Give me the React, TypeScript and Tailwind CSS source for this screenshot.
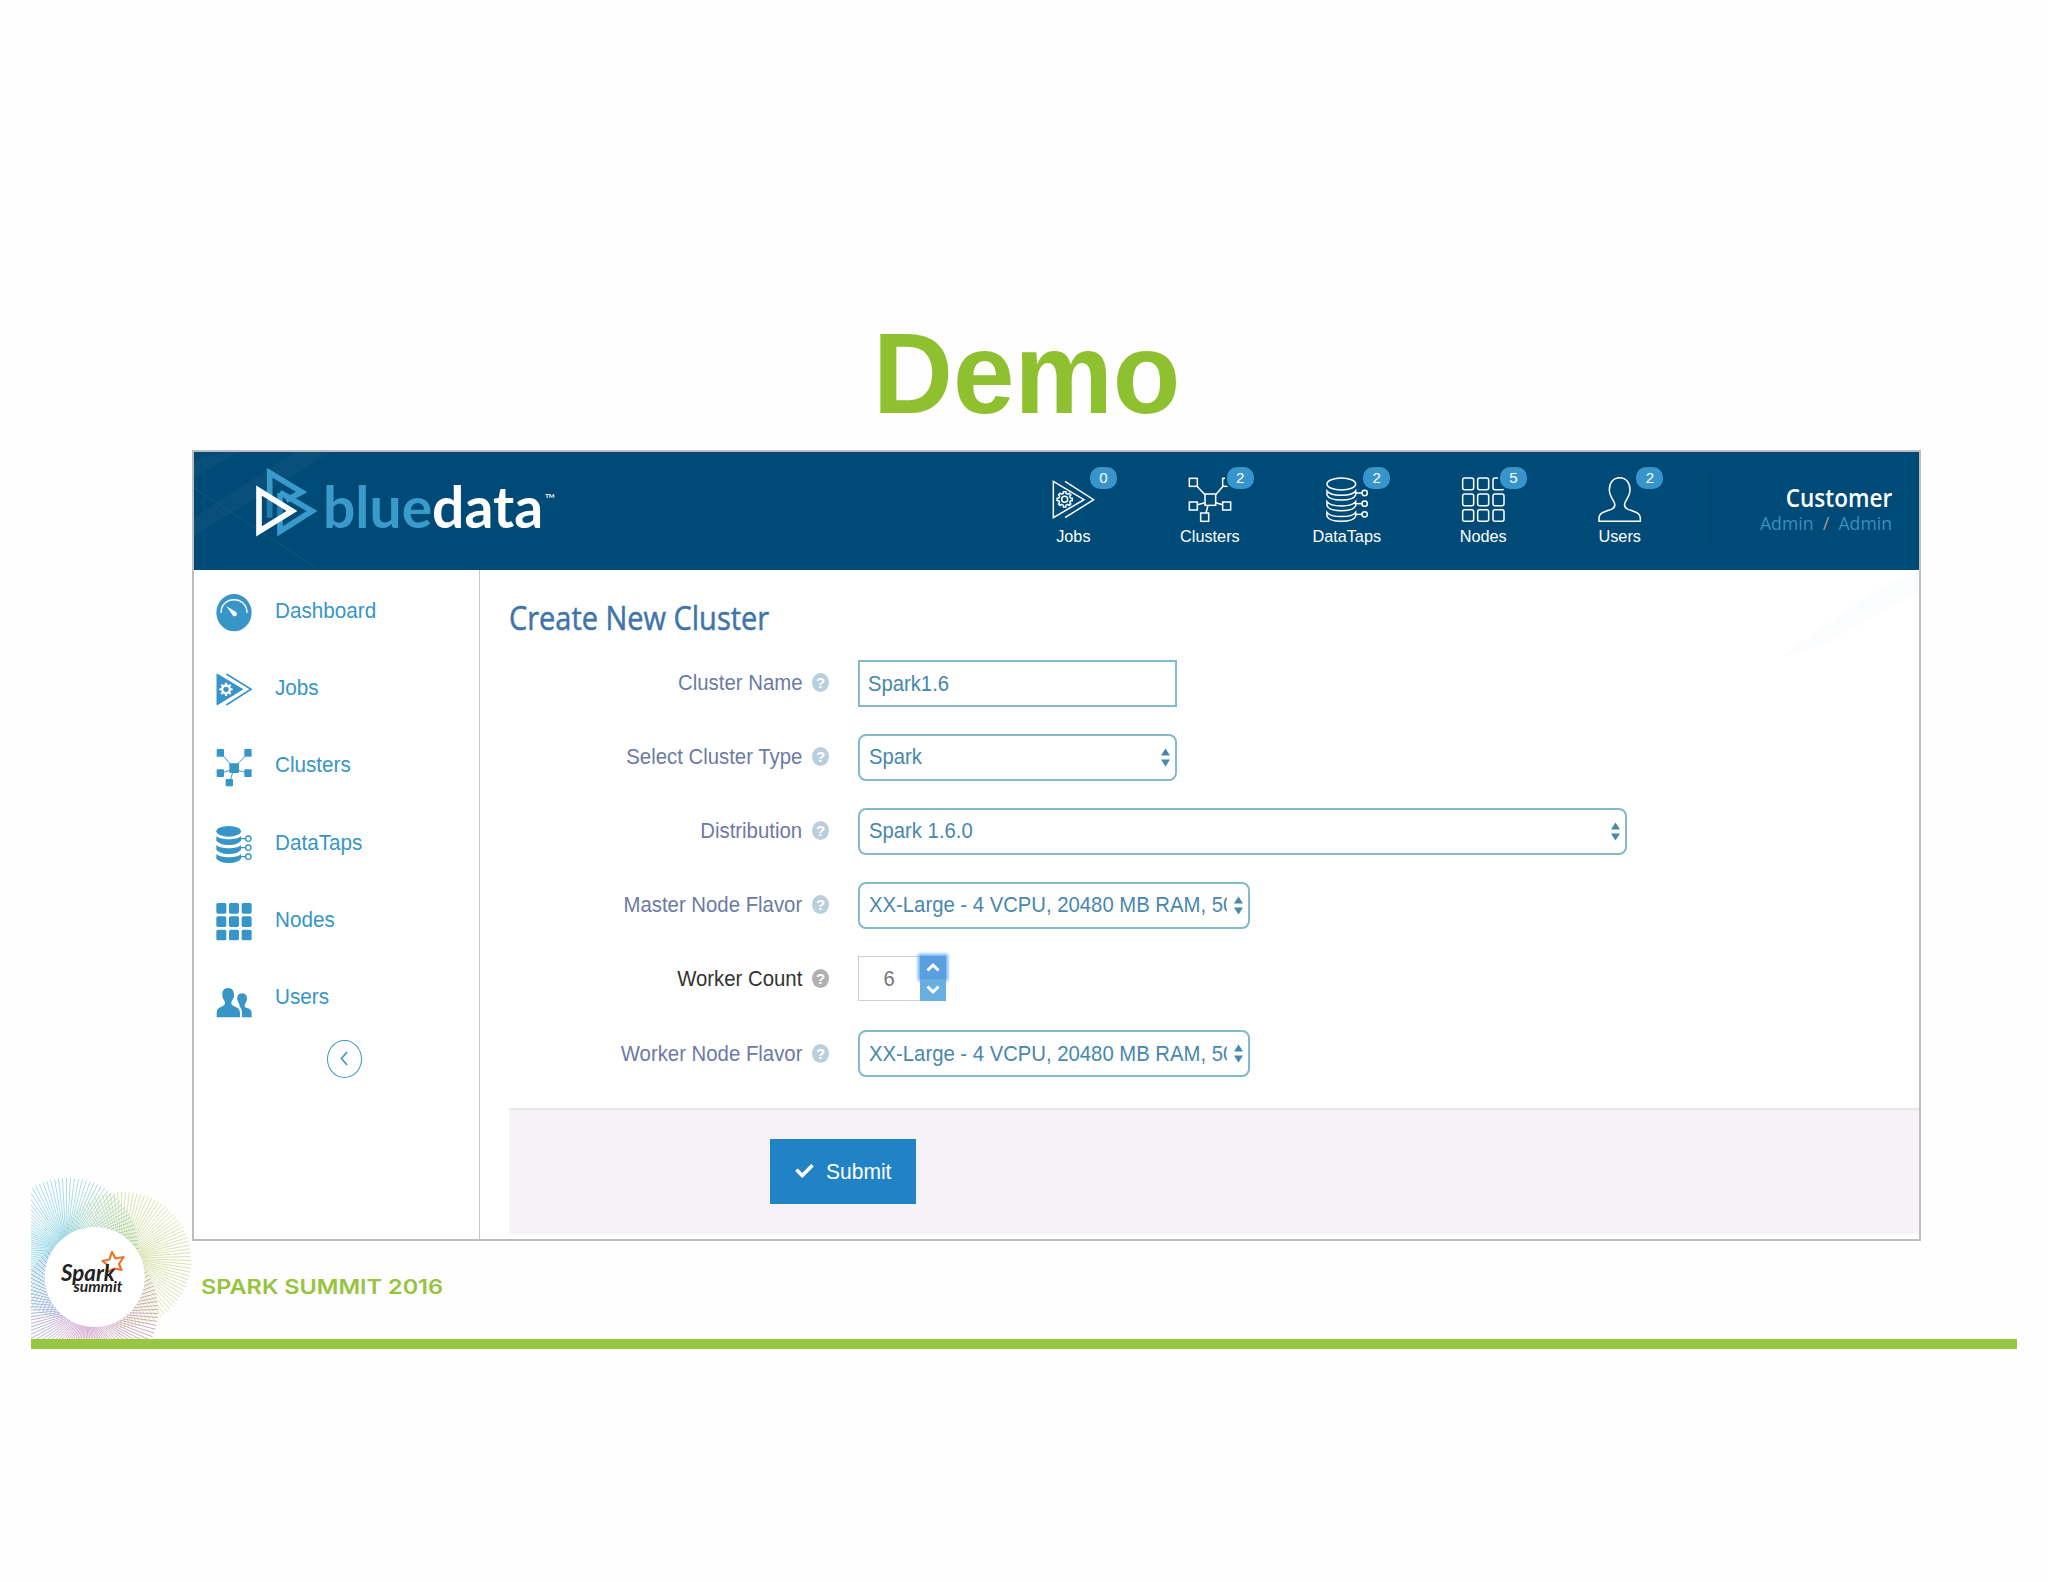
import type { ReactNode } from 'react';
import { FaCheck } from 'react-icons/fa';

/* ---------- helpers for drawn shapes ---------- */

// closed gear outline with rounded-off teeth
function gearPath(cx: number, cy: number, outer: number, inner: number, teeth: number) {
  const pts: string[] = [];
  const step = (Math.PI * 2) / teeth;
  for (let i = 0; i < teeth; i++) {
    const a = i * step - Math.PI / 2;
    [[-0.3, inner], [-0.2, outer], [0.2, outer], [0.3, inner]].forEach(([o, r]) => {
      pts.push(`${(cx + Math.cos(a + o * step) * r).toFixed(1)},${(cy + Math.sin(a + o * step) * r).toFixed(1)}`);
    });
  }
  return `M${pts.join('L')}Z`;
}

// fan of slightly twisted spokes
function fanPath(cx: number, cy: number, r: number, count: number, twist: number) {
  let d = '';
  for (let i = 0; i < count; i++) {
    const a = (i / count) * Math.PI * 2;
    const b = a + twist;
    d += `M${(cx + Math.cos(a) * 5).toFixed(1)} ${(cy + Math.sin(a) * 5).toFixed(1)}L${(cx + Math.cos(b) * r).toFixed(1)} ${(cy + Math.sin(b) * r).toFixed(1)}`;
  }
  return d;
}

/* ---------- header icons (outlined) ---------- */

const JobsOutline = () => (
  <>
    <path d="M7 13L99 68L7 122Z" />
    <path d="M42 13L128 68L42 122" />
    <path d={gearPath(41, 67, 23, 18, 8)} />
    <circle cx="41" cy="67" r="9" />
  </>
);

const ClustersOutline = () => (
  <>
    <rect x="51" y="51" width="32" height="34" />
    <rect x="4" y="4" width="24" height="24" />
    <rect x="104" y="4" width="24" height="24" />
    <rect x="4" y="75" width="24" height="24" />
    <rect x="104" y="75" width="24" height="24" />
    <rect x="38" y="108" width="24" height="25" />
    <path d="M27 28L51 53M105 28L83 53M28 83L51 77M104 83L83 77M54 108L60 85" />
  </>
);

const DataTapsOutline = () => (
  <>
    <ellipse cx="49" cy="21" rx="43" ry="18" />
    {[42, 74, 106].map((y) => (
      <g key={y}>
        <path d={`M6 ${y}V${y + 12}C14 ${y + 32} 84 ${y + 32} 92 ${y + 12}V${y}C80 ${y + 17} 18 ${y + 17} 6 ${y}Z`} />
        <path d={`M92 ${y + 6}H112`} />
        <circle cx="119" cy={y + 6} r="8" />
      </g>
    ))}
  </>
);

const NodesOutline = () => (
  <>
    {[3, 51, 98].map((y) => [5, 50, 96].map((x) => <rect key={`${x}-${y}`} x={x} y={y} width="33" height="35" rx="6" />))}
  </>
);

const UsersOutline = () => (
  <path d="M65 2C45 2 34 18 34 38C34 58 47 68 50 80C52 90 47 94 40 97C22 104 3 106 3 124V133H127V124C127 106 108 104 90 97C83 94 78 90 80 80C83 68 96 58 96 38C96 18 85 2 65 2Z" />
);

/* ---------- sidebar icons (solid), 36 x 37 box drawn at 3x ---------- */

const DashboardSolid = () => (
  <>
    <ellipse cx="54" cy="56" rx="53" ry="56" />
    <path d="M15 57C15 4 93 4 93 57" fill="none" stroke="#fff" strokeWidth="4" />
    <path d="M31 36L60 54C67 60 60 70 52 66C50 64 49 63 48 61Z" fill="#fff" />
  </>
);

const JobsSolid = () => (
  <>
    <path d="M3 9L80 55L3 102Z" stroke="currentColor" strokeWidth="3" strokeLinejoin="round" />
    <path d="M31 9L105 55L31 102" fill="none" stroke="currentColor" strokeWidth="5" />
    <path d={gearPath(30, 55, 20, 15, 8)} fill="#fff" />
    <circle cx="30" cy="55" r="8" />
  </>
);

const ClustersSolid = () => (
  <>
    <rect x="40" y="43" width="29" height="29" rx="3" />
    <rect x="2" y="0" width="22" height="23" rx="3" />
    <rect x="85" y="0" width="22" height="23" rx="3" />
    <rect x="2" y="61" width="22" height="23" rx="3" />
    <rect x="85" y="61" width="22" height="23" rx="3" />
    <rect x="29" y="90" width="22" height="22" rx="3" />
    <path d="M14 12L54 57L96 12M14 73L54 60L96 73M54 57L41 100" fill="none" stroke="currentColor" strokeWidth="3" />
  </>
);

const DataTapsSolid = () => (
  <>
    <ellipse cx="38" cy="16" rx="37" ry="16" />
    {[30, 57, 84].map((y) => (
      <g key={y}>
        <path d={`M1 ${y}C14 ${y + 13} 64 ${y + 13} 75 ${y}V${y + 14}C64 ${y + 31} 14 ${y + 31} 1 ${y + 14}Z`} />
        <path d={`M74 ${y + 8}H90`} stroke="currentColor" strokeWidth="4" />
        <circle cx="97" cy={y + 8} r="8" fill="none" stroke="currentColor" strokeWidth="4" />
      </g>
    ))}
  </>
);

const NodesSolid = () => (
  <>
    {[0, 40, 80].map((y) => [1, 39, 77].map((x) => <rect key={`${x}-${y}`} x={x} y={y} width="30" height="32" rx="5" />))}
  </>
);

const UsersSolid = () => (
  <>
    <path d="M36 24C23 24 18 34 19 47C20 58 27 60 27 70C27 82 2 78 2 98V112H72V98C72 78 46 82 46 70C46 60 53 58 54 47C55 34 49 24 36 24Z" />
    <path d="M78 40C67 40 63 49 64 58C65 67 71 70 71 78C71 84 78 82 78 98V112H107V99C107 82 86 86 86 78C86 70 92 67 93 58C94 49 89 40 78 40Z" />
  </>
);

/* ---------- data ---------- */

const TOP_ITEMS: { label: string; count: number; icon: ReactNode }[] = [
  { label: 'Jobs', count: 0, icon: <JobsOutline /> },
  { label: 'Clusters', count: 2, icon: <ClustersOutline /> },
  { label: 'DataTaps', count: 2, icon: <DataTapsOutline /> },
  { label: 'Nodes', count: 5, icon: <NodesOutline /> },
  { label: 'Users', count: 2, icon: <UsersOutline /> },
];

const SIDE_ITEMS: { label: string; icon: ReactNode }[] = [
  { label: 'Dashboard', icon: <DashboardSolid /> },
  { label: 'Jobs', icon: <JobsSolid /> },
  { label: 'Clusters', icon: <ClustersSolid /> },
  { label: 'DataTaps', icon: <DataTapsSolid /> },
  { label: 'Nodes', icon: <NodesSolid /> },
  { label: 'Users', icon: <UsersSolid /> },
];

const FLAVOR = 'XX-Large - 4 VCPU, 20480 MB RAM, 500 GB';

/* ---------- form pieces ---------- */

interface FormRowProps {
  label: string;
  muted?: boolean;
  children: ReactNode;
}

function FormRow({ label, muted = true, children }: FormRowProps) {
  return (
    <div className="flex h-[74.1px] items-center">
      <div className="flex w-[349px] items-center justify-end">
        <label
          className={`origin-right scale-x-[.925] text-[22px] leading-none whitespace-nowrap ${muted ? 'text-[#6c7aa5]' : 'text-[#333]'}`}
        >
          {label}
        </label>
        <span
          className={`mb-px ml-[10px] flex h-[19px] w-[17px] items-center justify-center rounded-[50%] text-[15px] leading-none font-bold text-white ${muted ? 'bg-[#b9cfdb]' : 'bg-[#b1b0b2]'}`}
        >
          ?
        </span>
      </div>
      <div className="ml-[29px]">{children}</div>
    </div>
  );
}

function SelectBox({ value, width }: { value: string; width: string }) {
  return (
    <div className={`flex h-[47px] items-center rounded-[8px] border-2 border-[#83b9cd] bg-white pr-[5px] pl-[9px] ${width}`}>
      <div className="mr-[7px] flex-1 overflow-hidden">
        <span className="block origin-left scale-x-[.922] text-[22px] leading-[30px] whitespace-nowrap text-[#4788ab]">{value}</span>
      </div>
      <svg className="h-[19px] w-[9px] shrink-0" viewBox="0 0 9 19" fill="#4788ab">
        <path d="M4.5 0.5L9 7.5H0ZM4.5 18.5L9 11.5H0Z" />
      </svg>
    </div>
  );
}

function Stepper({ value }: { value: number }) {
  return (
    <div className="mb-[2px] flex h-[45px]">
      <div className="flex w-[62px] items-center justify-center border border-r-0 border-[#cfced4] text-[22px] text-[#777]">
        <span className="scale-x-[.92]">{value}</span>
      </div>
      <div className="flex w-[26px] flex-col">
        <div className="flex h-[23px] items-center justify-center bg-[#5a9fe0] shadow-[0_0_3px_2px_#6cb0fa]">
          <svg className="h-[10px] w-[14px]" viewBox="0 0 14 10" fill="none" stroke="#fff" strokeWidth="3">
            <path d="M1.5 8.5L7 3L12.5 8.5" />
          </svg>
        </div>
        <div className="flex h-[22px] items-center justify-center bg-[#68aee0]">
          <svg className="h-[10px] w-[14px]" viewBox="0 0 14 10" fill="none" stroke="#fff" strokeWidth="3">
            <path d="M1.5 1.5L7 7L12.5 1.5" />
          </svg>
        </div>
      </div>
    </div>
  );
}

/* ---------- page sections ---------- */

function Header() {
  return (
    <header className="relative flex h-[118px] bg-[#004a77]">
      {/* faint light streaks behind the logo */}
      <svg className="absolute top-0 left-0 h-[118px] w-[160px]" viewBox="0 0 160 118">
        <path d="M0 8L30 0H44L0 26ZM0 66L100 0H138L0 84Z" fill="#fff" fillOpacity=".03" />
        <path d="M0 36L124 117" stroke="#fff" strokeOpacity=".07" />
      </svg>
      <div className="relative flex pt-[15px] pl-[62px]">
        <svg className="h-[70px] w-[62px]" viewBox="228 82 186 210" fill="none" strokeWidth="17" strokeMiterlimit="10">
          <path d="M269 234V99L365 157L318 182" stroke="#3a9bcb" />
          <path d="M300 160V275L396 214L300 158" stroke="#3a9bcb" />
          <path d="M237 153V275L336 214Z" fill="#004a77" fillOpacity=".35" stroke="#fff" />
        </svg>
        <div className="ml-[5px] flex h-[90px] items-start font-['Lato',sans-serif] text-[57px] leading-[79px] font-bold">
          <span className="text-[#3a9bcb]">blue</span>
          <span className="text-white">data</span>
          <span className="mt-[24px] ml-[2px] text-[6px] leading-[10px] text-white">TM</span>
        </div>
      </div>

      <nav className="ml-auto flex">
        {TOP_ITEMS.map((item) => (
          <div key={item.label} className="relative flex w-[136.6px] flex-col items-center pt-[25px]">
            <svg className="h-[46px] w-[44px]" viewBox="0 0 132 138" fill="none" stroke="#fff" strokeWidth="4.5">
              {item.icon}
            </svg>
            <span className="absolute top-[15px] left-[85px] flex h-[22px] w-[27px] items-center justify-center rounded-[10px] bg-[#3795cb] pb-px text-[15px] leading-none text-white shadow-[0_0_0_2px_#004a77]">
              {item.count}
            </span>
            <span className="mt-[3px] scale-x-[.935] text-[17.4px] leading-[20px] text-white">{item.label}</span>
          </div>
        ))}
      </nav>

      <div className="mt-[18px] ml-[22px] h-[76px] w-px bg-[#00416c]" />

      <div className="flex w-[208px] flex-col items-end pt-[31px] pr-[27px] font-['Open_Sans',sans-serif]">
        <span className="origin-right scale-x-[.9] text-[25px] leading-[28px] font-semibold text-white">Customer</span>
        <span className="origin-right scale-x-[.93] text-[19px] leading-[24px] whitespace-pre text-[#3a8fc0]">
          Admin <span className="text-[#a79a94]"> / </span> Admin
        </span>
      </div>
    </header>
  );
}

function Sidebar() {
  return (
    <aside className="flex w-[286px] flex-col border-r border-[#c6c5cc] pt-[4px] text-[#3795c8]">
      {SIDE_ITEMS.map((item) => (
        <div key={item.label} className="flex h-[77.3px] items-center pl-[22px]">
          <svg className="h-[37.3px] w-[36px] overflow-visible" viewBox="0 0 108 112" fill="currentColor">
            {item.icon}
          </svg>
          <span className="mb-[4px] ml-[23px] origin-left scale-x-[.94] text-[22px] leading-none">{item.label}</span>
        </div>
      ))}
      <div className="mt-[2px] ml-[133px] flex h-[38px] w-[35px] items-center justify-center rounded-[50%] border border-[#3795c8]">
        <svg className="mr-[2px] h-[15px] w-[8px]" viewBox="0 0 8 15" fill="none" stroke="currentColor" strokeWidth="1.6">
          <path d="M7 1L1.5 7.5L7 14" />
        </svg>
      </div>
    </aside>
  );
}

function CreateClusterForm() {
  return (
    <main className="relative flex flex-1 flex-col">
      <svg className="absolute top-0 right-0 h-[92px] w-[150px]" viewBox="0 0 150 92">
        <path d="M10 88L120 12L150 2V22L50 76Z" fill="#f7f8fd" fillOpacity=".45" />
      </svg>
      <h2 className="relative ml-[29px] h-[76px] origin-left scale-x-[.905] pt-[28px] font-['Open_Sans',sans-serif] text-[32px] leading-[40px] font-medium text-[#3f74a8] [-webkit-text-stroke:0.5px_#3f74a8]">
        Create New Cluster
      </h2>
      <div>
        <FormRow label="Cluster Name">
          <div className="flex h-[47px] w-[319px] items-center border-2 border-[#83b9cd] pl-[8px]">
            <span className="origin-left scale-x-[.92] text-[22px] text-[#4788ab]">Spark1.6</span>
          </div>
        </FormRow>
        <FormRow label="Select Cluster Type">
          <SelectBox value="Spark" width="w-[319px]" />
        </FormRow>
        <FormRow label="Distribution">
          <SelectBox value="Spark 1.6.0" width="w-[769px]" />
        </FormRow>
        <FormRow label="Master Node Flavor">
          <SelectBox value={FLAVOR} width="w-[392px]" />
        </FormRow>
        <FormRow label="Worker Count" muted={false}>
          <Stepper value={6} />
        </FormRow>
        <FormRow label="Worker Node Flavor">
          <SelectBox value={FLAVOR} width="w-[392px]" />
        </FormRow>
      </div>
      <div className="mt-auto mb-[5px] ml-[29px] flex h-[126px] items-start border-t-2 border-[#e8e7ea] bg-[#f5f3f7] pt-[29px] pl-[261px]">
        <button type="button" className="flex h-[65px] w-[146px] items-center bg-[#2182c6] pb-px pl-[25px] text-white">
          <FaCheck className="h-[18px] w-[19px]" />
          <span className="ml-[12px] origin-left scale-x-[.955] text-[22px]">Submit</span>
        </button>
      </div>
    </main>
  );
}

function SummitBadge() {
  return (
    <svg className="h-[162px] w-[161px]" viewBox="31 1177 161 162">
      <defs>
        <linearGradient id="fanBlue" gradientUnits="userSpaceOnUse" x1="30" y1="1250" x2="138" y2="1230">
          <stop offset="0" stopColor="#7fcfea" />
          <stop offset="0.55" stopColor="#8fd3da" />
          <stop offset="1" stopColor="#8cc8a6" />
        </linearGradient>
        <linearGradient id="fanPurple" gradientUnits="userSpaceOnUse" x1="30" y1="1270" x2="150" y2="1330">
          <stop offset="0" stopColor="#6fa3c8" />
          <stop offset="0.5" stopColor="#cf97cc" />
          <stop offset="1" stopColor="#b98f98" />
        </linearGradient>
      </defs>
      <g fill="none" strokeWidth="0.75">
        <path d={fanPath(123, 1260, 68, 110, 0.35)} stroke="#cddb96" />
        <path d={fanPath(68, 1248, 70, 110, 0.35)} stroke="url(#fanBlue)" />
        <path d={fanPath(88, 1310, 70, 110, -0.35)} stroke="url(#fanPurple)" />
      </g>
      <circle cx="94.7" cy="1277" r="50" fill="#fff" />
      <path
        d="M112 1252L115.5 1258.5L123.5 1257L119 1264L121.5 1270L114.5 1268.5L107 1272L107.5 1265L102.5 1261L109.5 1259.5Z"
        fill="none"
        stroke="#ee7326"
        strokeWidth="2.2"
        strokeLinejoin="round"
      />
      <g fill="#222" fontFamily="Lato, sans-serif" fontStyle="italic" fontWeight="700">
        <text x="61" y="1280.5" fontSize="22" textLength="54" lengthAdjust="spacingAndGlyphs">
          Spark
        </text>
        <text x="73.5" y="1291.5" fontSize="16" textLength="49" lengthAdjust="spacingAndGlyphs">
          summit
        </text>
      </g>
    </svg>
  );
}

export default function App() {
  return (
    <div className="flex h-[1582px] w-[2048px] flex-col overflow-hidden bg-[#fefefe] font-['Liberation_Sans',Arial,sans-serif]">
      <div className="flex h-[450px] items-end justify-center pl-[6px]">
        <h1 className="mb-[12px] scale-x-[.962] text-[115px] leading-[130px] font-bold text-[#8fc02f]">Demo</h1>
      </div>

      <div className="flex h-[889px]">
        <div className="flex w-[192px] items-end justify-end">
          <SummitBadge />
        </div>
        <div className="flex w-[1729px] flex-col">
          <div className="flex h-[791px] flex-col border-2 border-[#bdbdbd] bg-white">
            <Header />
            <div className="flex flex-1">
              <Sidebar />
              <CreateClusterForm />
            </div>
          </div>
          <div className="flex flex-1 items-center pb-[5px] pl-[9px]">
            <span className="origin-left scale-x-[1.157] font-['Inter',sans-serif] text-[20.3px] leading-none font-semibold text-[#97c43f]">
              SPARK SUMMIT 2016
            </span>
          </div>
        </div>
      </div>

      <div className="mr-[31px] ml-[31px] h-[10px] bg-[#99c63f]" />
    </div>
  );
}
